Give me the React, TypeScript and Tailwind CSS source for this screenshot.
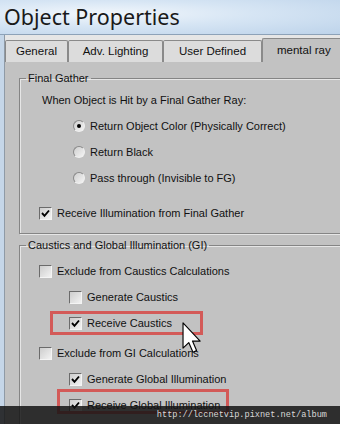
import React from "react";

// classic 3ds Max object properties dialog, mental ray tab

function Check({ checked }: { checked?: boolean }) {
  return (
    <span className="relative w-[13px] h-[13px] shrink-0 border border-t-[#6b6b6b] border-l-[#6b6b6b] border-r-[#f4f4f4] border-b-[#f4f4f4] bg-gradient-to-br from-[#cdcdcd] to-[#f2f2f2]">
      {checked && (
        <svg className="absolute left-[1px] top-[1px]" width="9" height="9" viewBox="0 0 9 9">
          <path d="M1 4 L3.5 6.8 L8 1.5" fill="none" stroke="#000" strokeWidth="1.9" />
        </svg>
      )}
    </span>
  );
}

function Radio({ selected }: { selected?: boolean }) {
  return (
    <span className="relative w-[12px] h-[12px] shrink-0 rounded-full border border-t-[#8a8a8a] border-l-[#8a8a8a] border-r-[#f0f0f0] border-b-[#f0f0f0] bg-gradient-to-br from-[#cfcfcf] to-[#f4f4f4] flex items-center justify-center">
      {selected && <span className="w-[4px] h-[4px] rounded-full bg-black" />}
    </span>
  );
}

function CheckRow({ label, checked, indent }: { label: string; checked?: boolean; indent?: boolean }) {
  return (
    <div className={`h-[26px] flex items-center gap-[5px] ${indent ? "pl-[49px]" : "pl-[19px]"}`}>
      <Check checked={checked} />
      <span>{label}</span>
    </div>
  );
}

function RadioRow({ label, selected }: { label: string; selected?: boolean }) {
  return (
    <div className="h-[26px] flex items-center gap-[5px] pl-[53px]">
      <Radio selected={selected} />
      <span>{label}</span>
    </div>
  );
}

const tabs = [
  { name: "General", w: "w-[63px]" },
  { name: "Adv. Lighting", w: "w-[95px]" },
  { name: "User Defined", w: "w-[99px]" },
];

export default function App() {
  return (
    <div className="relative w-[340px] h-[424px] overflow-hidden bg-[#c2c2c2] text-[11px] text-[#111] font-['Liberation_Sans',sans-serif]">
      {/* title bar */}
      <div className="h-[35px] shrink-0 bg-[radial-gradient(ellipse_at_30%_40%,#f2f7fc_0%,#d6e5f4_45%,#bdd3ea_100%)] border-b border-[#8da2b8] flex items-center pl-[4px] pb-[1px]">
        <span className="text-[21.5px] leading-none text-[#1a1a1a] font-['Noto_Sans',sans-serif]">
          Object Properties
        </span>
      </div>

      <div className="flex h-[389px]">
        <div className="w-[5px] shrink-0 bg-[#c5d6e8] border-r border-[#8f9aa6]" />
        <div className="flex-1 flex flex-col">
          {/* tabs */}
          <div className="h-[27px] shrink-0 bg-[#e6e6e6] flex items-end">
            {tabs.map((t) => (
              <div
                key={t.name}
                className={`${t.w} h-[22px] bg-[#dcdcdc] border border-[#8a8a8a] border-b-0 rounded-t-[2px] flex items-center justify-center text-[11.5px]`}
              >
                {t.name}
              </div>
            ))}
            <div className="flex-1 h-[25px] bg-[#c2c2c2] border-t border-l border-[#8a8a8a] rounded-tl-[2px] flex items-center pl-[14px] text-[11.5px] -mb-[1px]">
              mental ray
            </div>
          </div>

          {/* panel */}
          <div className="flex-1 min-h-0 bg-[#c2c2c2] pl-[14px] pt-[9px]">
            <fieldset className="w-[340px] border border-[#858585] shadow-[1px_1px_0_#e6e6e6,inset_1px_1px_0_#e6e6e6] pb-[7px]">
              <legend className="ml-[6px] px-[2px] leading-[14px]">Final Gather</legend>
              <div className="h-[26px] mt-[2px] flex items-center pl-[22px]">When Object is Hit by a Final Gather Ray:</div>
              <RadioRow label="Return Object Color (Physically Correct)" selected />
              <RadioRow label="Return Black" />
              <RadioRow label="Pass through (Invisible to FG)" />
              <div className="h-[9px]" />
              <CheckRow label="Receive Illumination from Final Gather" checked />
            </fieldset>

            <fieldset className="w-[340px] h-[200px] border border-[#858585] shadow-[1px_1px_0_#e6e6e6,inset_1px_1px_0_#e6e6e6] mt-[4px]">
              <legend className="ml-[6px] px-[2px] leading-[14px]">Caustics and Global Illumination (GI)</legend>
              <div className="h-[6px]" />
              <CheckRow label="Exclude from Caustics Calculations" />
              <CheckRow label="Generate Caustics" indent />
              <CheckRow label="Receive Caustics" checked indent />
              <div className="h-[4px]" />
              <CheckRow label="Exclude from GI Calculations" />
              <CheckRow label="Generate Global Illumination" checked indent />
              <CheckRow label="Receive Global Illumination" checked indent />
            </fieldset>
          </div>
        </div>
      </div>

      {/* red highlight boxes */}
      <div className="absolute left-[50px] top-[311px] w-[153px] h-[24px] border-[3px] border-[#d35a58]" />
      <div className="absolute left-[57px] top-[389px] w-[172px] h-[25px] border-[3px] border-[#d35a58]" />

      {/* mouse cursor */}
      <svg className="absolute left-[182px] top-[322px]" width="20" height="31" viewBox="0 0 12 19">
        <path d="M0.5 0.5 L0.5 16 L4 12.6 L6.6 18.5 L8.8 17.5 L6.3 11.7 L11 11.7 Z" fill="#fff" stroke="#000" strokeWidth="0.7" strokeLinejoin="round" />
      </svg>

      {/* watermark strip */}
      <div className="absolute left-0 right-0 bottom-0 h-[18px] bg-[rgba(20,20,20,0.85)] flex items-center justify-end pr-[13px]">
        <span className="font-['Liberation_Mono',monospace] text-[8.6px] text-[#d8d8d8]">http://lccnetvip.pixnet.net/album</span>
      </div>
    </div>
  );
}
